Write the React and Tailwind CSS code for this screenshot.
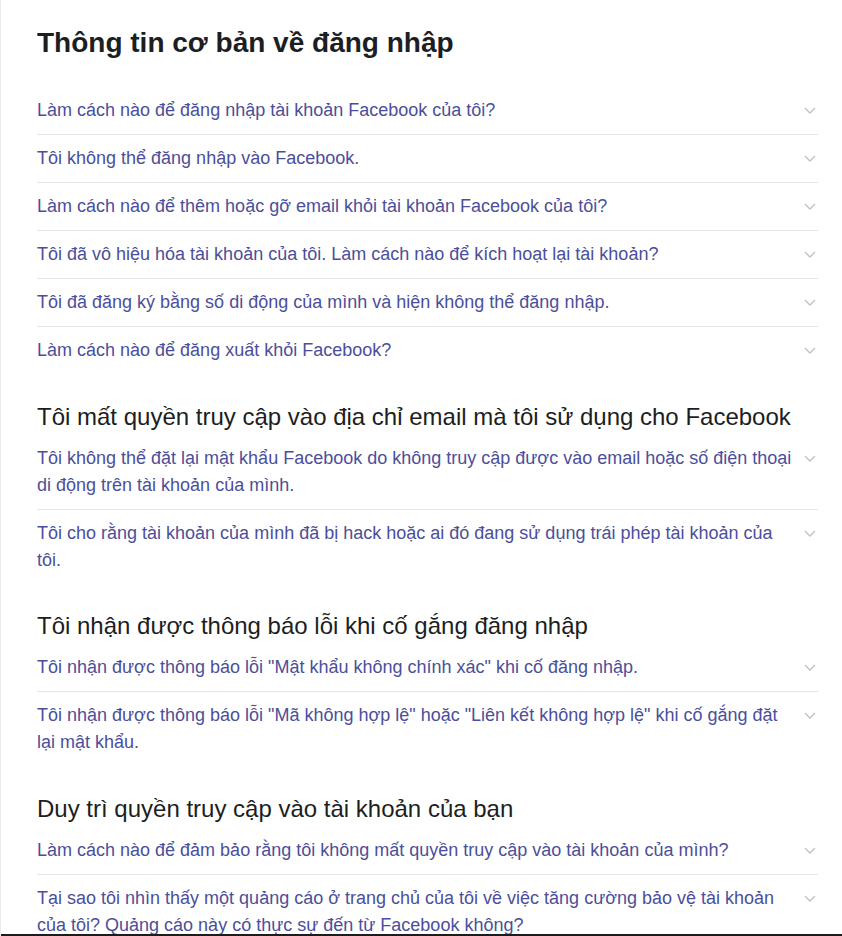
const sections = [
  {
    title: 'Thông tin cơ bản về đăng nhập',
    main: true,
    items: [
      'Làm cách nào để đăng nhập tài khoản Facebook của tôi?',
      'Tôi không thể đăng nhập vào Facebook.',
      'Làm cách nào để thêm hoặc gỡ email khỏi tài khoản Facebook của tôi?',
      'Tôi đã vô hiệu hóa tài khoản của tôi. Làm cách nào để kích hoạt lại tài khoản?',
      'Tôi đã đăng ký bằng số di động của mình và hiện không thể đăng nhập.',
      'Làm cách nào để đăng xuất khỏi Facebook?',
    ],
  },
  {
    title: 'Tôi mất quyền truy cập vào địa chỉ email mà tôi sử dụng cho Facebook',
    items: [
      'Tôi không thể đặt lại mật khẩu Facebook do không truy cập được vào email hoặc số điện thoại di động trên tài khoản của mình.',
      'Tôi cho rằng tài khoản của mình đã bị hack hoặc ai đó đang sử dụng trái phép tài khoản của tôi.',
    ],
  },
  {
    title: 'Tôi nhận được thông báo lỗi khi cố gắng đăng nhập',
    items: [
      'Tôi nhận được thông báo lỗi "Mật khẩu không chính xác" khi cố đăng nhập.',
      'Tôi nhận được thông báo lỗi "Mã không hợp lệ" hoặc "Liên kết không hợp lệ" khi cố gắng đặt lại mật khẩu.',
    ],
  },
  {
    title: 'Duy trì quyền truy cập vào tài khoản của bạn',
    items: [
      'Làm cách nào để đảm bảo rằng tôi không mất quyền truy cập vào tài khoản của mình?',
      'Tại sao tôi nhìn thấy một quảng cáo ở trang chủ của tôi về việc tăng cường bảo vệ tài khoản của tôi? Quảng cáo này có thực sự đến từ Facebook không?',
    ],
  },
];

const Chevron = () => (
  <svg width="12" height="7" viewBox="0 0 12 7" fill="none">
    <polyline points="1,1 6,6 11,1" stroke="#bec3c9" strokeWidth="1.4" />
  </svg>
);

const Question = ({ text }) => {
  // long questions wrap onto two lines and sit a touch tighter
  const pad = text.length > 90 ? 'pt-[10px] pb-[9.5px]' : 'py-[10px]';
  return (
    <div className={`flex items-start gap-[6px] ${pad}`}>
      <a href="#" className="flex-1 text-[18px] leading-[27px] text-[#4b4f9b]">
        {text}
      </a>
      <div className="w-[16px] h-[27px] shrink-0 flex items-center justify-center">
        <Chevron />
      </div>
    </div>
  );
};

export default function App() {
  return (
    <div
      className="relative h-[936px] overflow-hidden bg-white border-l border-[#e9ebee]"
      style={{ fontFamily: '"Liberation Sans", Arial, sans-serif' }}
    >
      <div className="pl-[36px] pr-[24px] pt-[26px]">
        {sections.map((s) => (
          <section key={s.title}>
            {s.main ? (
              <h1 className="text-[28px] leading-[34px] font-bold text-[#1c1e21] mb-[27px]">{s.title}</h1>
            ) : (
              <h2 className="text-[24px] leading-[30px] text-[#1c1e21] mt-[28px] mb-[3px]">{s.title}</h2>
            )}
            <div className="divide-y divide-[#e5e6e9]">
              {s.items.map((q) => (
                <Question key={q} text={q} />
              ))}
            </div>
          </section>
        ))}
      </div>
      {/* window frame edge along the bottom */}
      <div className="absolute left-0 right-0 bottom-0 h-[2px] bg-[#1c1c1c]" />
    </div>
  );
}
